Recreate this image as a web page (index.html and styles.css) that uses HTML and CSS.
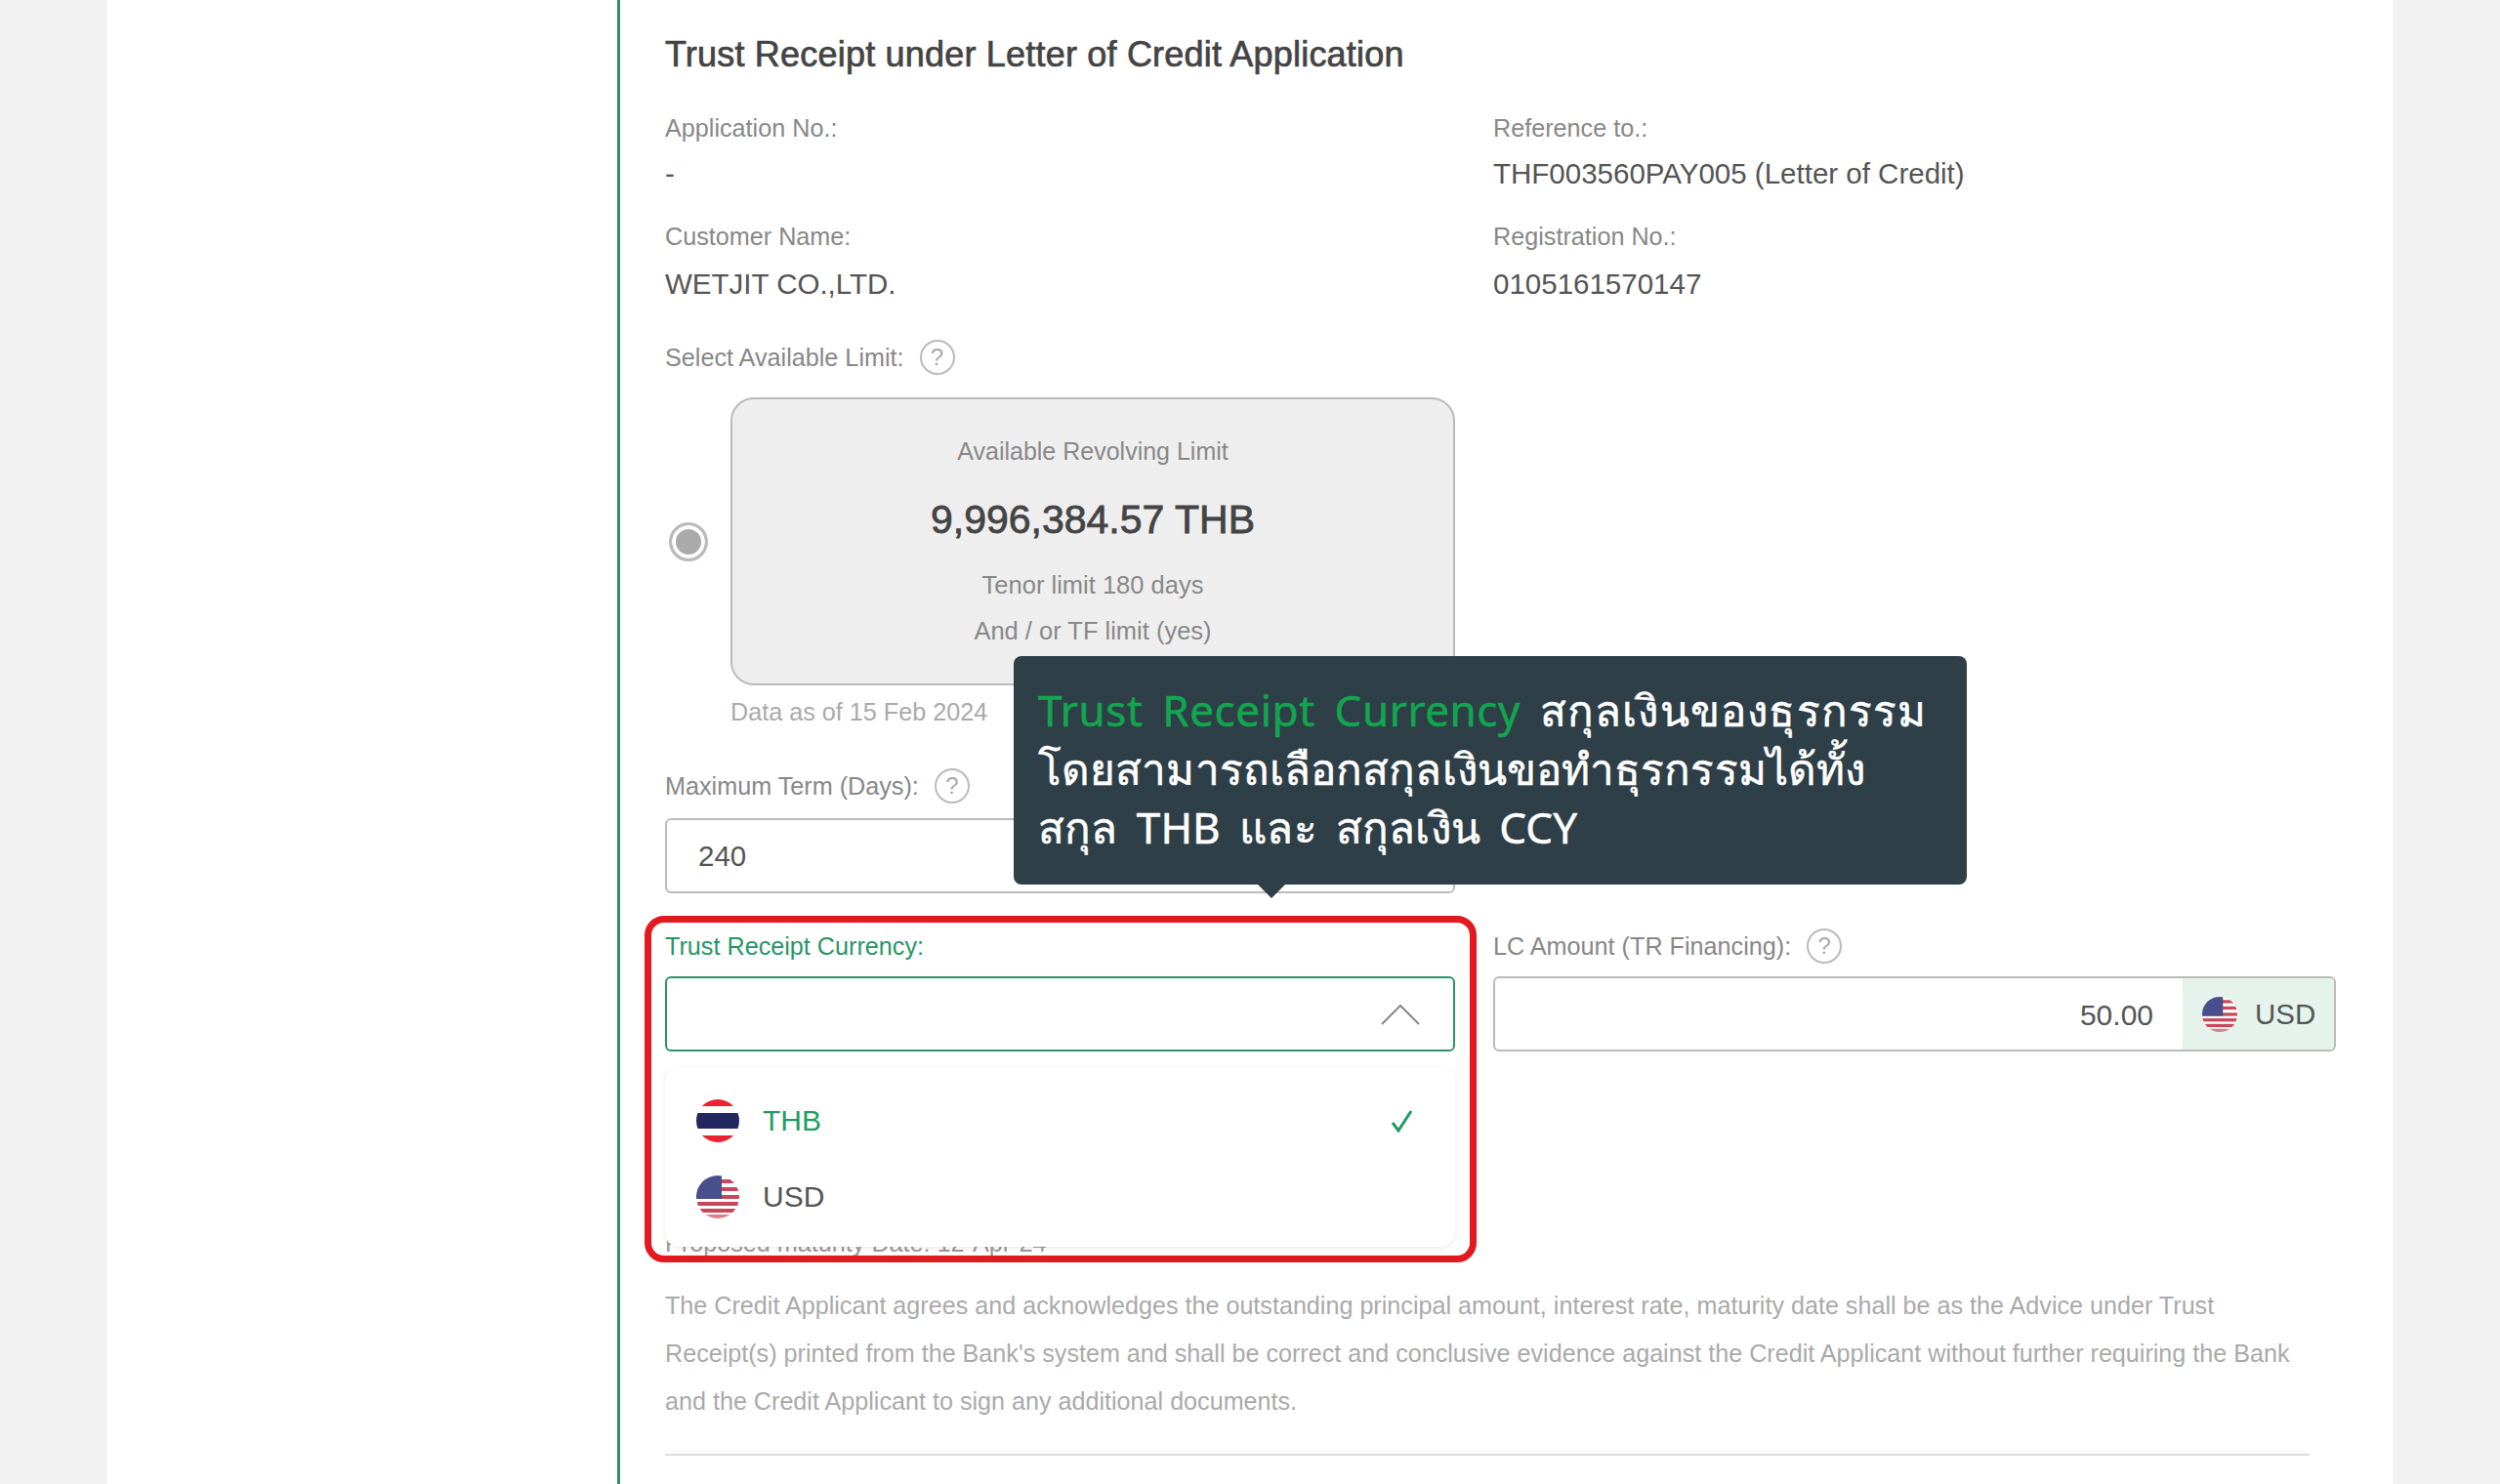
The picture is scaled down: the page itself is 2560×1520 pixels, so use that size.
FILE: index.html
```html
<!DOCTYPE html>
<html lang="en">
<head>
    <meta charset="UTF-8">
    <meta name="viewport" content="width=device-width, initial-scale=1.0">
    <title>Trust Receipt under Letter of Credit Application</title>
    <link rel="stylesheet" href="styles.css">
</head>
<body>
    <svg class="defs" width="0" height="0">
        <defs>
            <clipPath id="flag-clip"><circle cx="22" cy="22" r="22"/></clipPath>
            <g id="flag-thb" clip-path="url(#flag-clip)">
                <rect width="44" height="44" fill="#fff"/>
                <rect width="44" height="7" fill="#e8232f"/>
                <rect y="37" width="44" height="7" fill="#e8232f"/>
                <rect y="14" width="44" height="16" fill="#24265f"/>
            </g>
            <g id="flag-usd" clip-path="url(#flag-clip)">
                <rect width="44" height="44" fill="#fff"/>
                <rect y="4" width="44" height="4" fill="#c9475a"/>
                <rect y="12" width="44" height="4" fill="#c9475a"/>
                <rect y="20" width="44" height="4" fill="#c9475a"/>
                <rect y="27" width="44" height="4" fill="#c9475a"/>
                <rect y="34" width="44" height="4" fill="#c9475a"/>
                <rect y="40" width="44" height="4" fill="#d9808c"/>
                <rect width="26" height="24" fill="#474f8c"/>
            </g>
        </defs>
    </svg>

    <div class="sheet">
        <aside class="sidebar"></aside>
        <main class="content">
            <h1 class="title">Trust Receipt under Letter of Credit Application</h1>

            <div class="form-grid info-row">
                <div>
                    <div class="label">Application No.:</div>
                    <div class="value">-</div>
                </div>
                <div>
                    <div class="label">Reference to.:</div>
                    <div class="value">THF003560PAY005 (Letter of Credit)</div>
                </div>
            </div>
            <div class="form-grid info-row">
                <div>
                    <div class="label">Customer Name:</div>
                    <div class="value">WETJIT CO.,LTD.</div>
                </div>
                <div>
                    <div class="label">Registration No.:</div>
                    <div class="value">0105161570147</div>
                </div>
            </div>

            <div class="label label-help limit-label">Select Available Limit: <span class="help">?</span></div>
            <div class="limit-row">
                <span class="radio"></span>
                <div class="limit-card">
                    <p class="limit-title">Available Revolving Limit</p>
                    <p class="limit-amount">9,996,384.57 THB</p>
                    <p class="limit-line">Tenor limit 180 days</p>
                    <p class="limit-line">And / or TF limit (yes)</p>
                </div>
            </div>
            <p class="limit-note">Data as of 15 Feb 2024</p>

            <div class="form-grid">
                <div>
                    <div class="label label-help">Maximum Term (Days): <span class="help">?</span></div>
                    <div class="input">240</div>
                </div>
            </div>

            <div class="form-grid currency-row">
                <div class="field">
                    <div class="label label-green">Trust Receipt Currency:</div>
                    <div class="input input-open">
                        <svg class="chevron" width="40" height="22" viewBox="0 0 40 22"><path d="M1 21 20 2l19 19" fill="none" stroke="#888" stroke-width="2"/></svg>
                    </div>
                    <ul class="dropdown">
                        <li class="option option-active">
                            <svg class="flag" width="44" height="44"><use href="#flag-thb"/></svg>
                            <span>THB</span>
                            <svg class="check" width="24" height="24" viewBox="0 0 24 24"><path d="M2 14l6 8L21 2" fill="none" stroke="#1e9e63" stroke-width="3"/></svg>
                        </li>
                        <li class="option">
                            <svg class="flag" width="44" height="44"><use href="#flag-usd"/></svg>
                            <span>USD</span>
                        </li>
                    </ul>
                </div>
                <div>
                    <div class="label label-help">LC Amount (TR Financing): <span class="help">?</span></div>
                    <div class="input input-amount">
                        <span class="amount">50.00</span>
                        <span class="addon">
                            <svg class="flag-small" width="36" height="36" viewBox="0 0 44 44"><use href="#flag-usd"/></svg>
                            USD
                        </span>
                    </div>
                </div>
            </div>

            <div class="label maturity-label">Proposed maturity Date: 12-Apr-24</div>

            <p class="terms">The Credit Applicant agrees and acknowledges the outstanding principal amount, interest rate, maturity date shall be as the Advice under Trust Receipt(s) printed from the Bank's system and shall be correct and conclusive evidence against the Credit Applicant without further requiring the Bank and the Credit Applicant to sign any additional documents.</p>
            <hr class="divider">

            <div class="highlight"></div>
            <div class="tooltip">
                <span class="tooltip-green">Trust Receipt Currency</span> <span class="tooltip-wide">สกุลเงินของธุรกรรม</span><br>
                โดยสามารถเลือกสกุลเงินขอทำธุรกรรมได้ทั้ง<br>
                สกุล THB และ สกุลเงิน CCY
            </div>
        </main>
    </div>
</body>
</html>
```

FILE: styles.css
```css
* {
    padding: 0;
    margin: 0;
    box-sizing: border-box;
}
html, body {
    height: 1520px;
    overflow: hidden;
}
body {
    background: #f2f2f2;
    font-family: "Liberation Sans", Arial, sans-serif;
    color: #555;
}
.defs {
    position: absolute;
}
.sheet {
    display: flex;
    height: 1520px;
    margin: 0 110px;
    background: #fff;
}
.sidebar {
    width: 525px;
    border-right: 3px solid #2a9468;
}
.content {
    position: relative;
    flex: 1;
    padding: 36px 58px 0 46px;
}
.title {
    font-size: 36px;
    line-height: 40px;
    font-weight: 400;
    letter-spacing: 0.2px;
    color: #444;
    -webkit-text-stroke: 0.7px #444;
}
.form-grid {
    display: grid;
    grid-template-columns: 809px 863px;
    column-gap: 39px;
}
.info-row {
    margin-top: 40px;
}
.info-row + .info-row {
    margin-top: 34px;
}
.label {
    font-size: 25.2px;
    line-height: 30px;
    color: #888;
}
.label-help {
    display: flex;
    align-items: center;
    gap: 16px;
    height: 36px;
}
.label-green {
    color: #2a9468;
    height: 36px;
    line-height: 36px;
}
.value {
    font-size: 29.5px;
    line-height: 30px;
    margin-top: 17px;
    color: #555;
}
.info-row + .info-row .value {
    margin-top: 19px;
}
.help {
    display: inline-flex;
    justify-content: center;
    align-items: center;
    width: 36px;
    height: 36px;
    border: 2px solid #bbb;
    border-radius: 50%;
    font-size: 24px;
    color: #aaa;
}
.limit-label {
    margin-top: 42px;
}
.limit-row {
    display: flex;
    align-items: center;
    margin-top: 23px;
}
.radio {
    width: 40px;
    height: 40px;
    margin: 0 23px 0 4px;
    border: 3px solid #bbb;
    border-radius: 50%;
    background: #aaa;
    box-shadow: inset 0 0 0 4px #fff;
}
.limit-card {
    width: 742px;
    height: 295px;
    padding-top: 38px;
    background: #eee;
    border: 2px solid #bbb;
    border-radius: 24px;
    text-align: center;
}
.limit-title {
    font-size: 25px;
    line-height: 30px;
    color: #888;
}
.limit-amount {
    margin-top: 32px;
    font-size: 41px;
    line-height: 46px;
    font-weight: 400;
    color: #444;
    -webkit-text-stroke: 0.8px #444;
}
.limit-line {
    margin-top: 29px;
    font-size: 25.5px;
    line-height: 30px;
    color: #888;
}
.limit-line + .limit-line {
    margin-top: 17px;
}
.limit-note {
    margin: 12px 0 0 67px;
    font-size: 25.2px;
    line-height: 30px;
    color: #aaa;
}
.limit-note + .form-grid {
    margin-top: 43px;
}
.input {
    display: flex;
    align-items: center;
    height: 77px;
    margin-top: 15px;
    padding: 0 32px;
    font-size: 29.5px;
    color: #555;
    border: 2px solid #bbb;
    border-radius: 6px;
    background: #fff;
}
.currency-row {
    margin-top: 36px;
}
.currency-row .input {
    margin-top: 13px;
}
.field {
    position: relative;
}
.input-open {
    justify-content: flex-end;
    border-color: #2a9468;
    padding-right: 34px;
}
.dropdown {
    position: absolute;
    top: 142px;
    left: 0;
    right: 0;
    z-index: 2;
    height: 184px;
    padding-top: 16px;
    list-style: none;
    background: #fff;
    border-radius: 14px;
    box-shadow: 0 1px 4px rgba(0, 0, 0, 0.1);
}
.option {
    display: flex;
    align-items: center;
    gap: 24px;
    height: 78px;
    padding: 0 42px 0 32px;
    font-size: 30px;
    color: #555;
}
.option-active {
    color: #1e9e63;
}
.check {
    margin-left: auto;
}
.input-amount {
    justify-content: space-between;
    padding: 0;
    overflow: hidden;
}
.amount {
    flex: 1;
    padding-top: 2px;
    padding-right: 30px;
    font-size: 30px;
    text-align: right;
}
.addon {
    display: flex;
    align-items: center;
    gap: 18px;
    height: 100%;
    width: 155px;
    padding-left: 20px;
    background: #e6f3ec;
}
.maturity-label {
    margin-top: 181px;
    color: #999;
}
.terms {
    width: 1684px;
    margin-top: 25px;
    font-size: 25.15px;
    line-height: 49px;
    color: #aaa;
}
.divider {
    width: 1684px;
    margin-top: 29px;
    border: 0;
    border-top: 2px solid #ddd;
}
.highlight {
    position: absolute;
    top: 938px;
    left: 25px;
    z-index: 3;
    width: 852px;
    height: 355px;
    border: 7px solid #e2191f;
    border-radius: 20px;
    pointer-events: none;
}
.tooltip {
    position: absolute;
    top: 672px;
    left: 403px;
    z-index: 4;
    width: 976px;
    height: 234px;
    padding: 25px 25px 0;
    font-family: "Noto Sans", "Open Sans", sans-serif;
    font-size: 44px;
    line-height: 60px;
    word-spacing: 8px;
    letter-spacing: 0.1px;
    color: #fff;
    background: #2f3f48;
    border-radius: 8px;
    -webkit-text-stroke: 0.5px currentColor;
}
.tooltip::after {
    content: "";
    position: absolute;
    top: 100%;
    left: 250px;
    border: 14px solid transparent;
    border-bottom: 0;
    border-top-color: #2f3f48;
}
.tooltip-green {
    color: #12a650;
    letter-spacing: 0.55px;
}
.tooltip-wide {
    letter-spacing: 1.2px;
}
```
